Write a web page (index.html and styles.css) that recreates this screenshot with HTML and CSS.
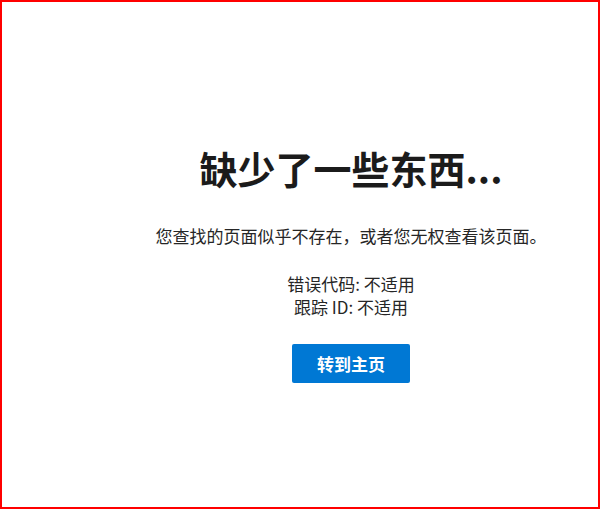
FILE: index.html
```html
<!DOCTYPE html>
<html lang="zh-CN">
<head>
<meta charset="utf-8">
<title>缺少了一些东西...</title>
<link rel="stylesheet" href="styles.css">
</head>
<body>
<main class="page">
  <section class="content">
    <h1 class="title">缺少了一些东西...</h1>
    <p class="message">您查找的页面似乎不存在，或者您无权查看该页面。</p>
    <div class="codes">
      <div class="code-line">错误代码: 不适用</div>
      <div class="code-line">跟踪 ID: 不适用</div>
    </div>
    <a class="home-btn" href="#">转到主页</a>
  </section>
</main>
</body>
</html>
```

FILE: styles.css
```css
html, body {
  margin: 0;
  padding: 0;
  background: #ffffff;
}

body {
  font-family: "Noto Sans CJK SC", "Noto Sans", sans-serif;
  color: #262626;
}

.page {
  box-sizing: border-box;
  width: 600px;
  height: 509px;
  border: 2px solid #ff0000;
  padding: 142px 0 0 102px;
}

.content {
  display: flex;
  flex-direction: column;
  align-items: center;
}

.title {
  margin: 0;
  font-size: 38px;
  line-height: 48px;
  font-weight: 700;
  color: #1b1b1b;
  white-space: nowrap;
}

.message {
  margin: 32px 0 0;
  font-size: 17px;
  line-height: 24px;
  color: #262626;
  white-space: nowrap;
}

.codes {
  margin-top: 24px;
  display: flex;
  flex-direction: column;
  align-items: center;
  font-size: 17px;
  line-height: 23px;
  color: #262626;
}

.home-btn {
  margin-top: 26px;
  box-sizing: border-box;
  height: 39px;
  padding: 0 25px;
  display: flex;
  align-items: center;
  justify-content: center;
  background: #0078d4;
  color: #ffffff;
  font-size: 17px;
  font-weight: 700;
  text-decoration: none;
  border-radius: 2px;
}
```
